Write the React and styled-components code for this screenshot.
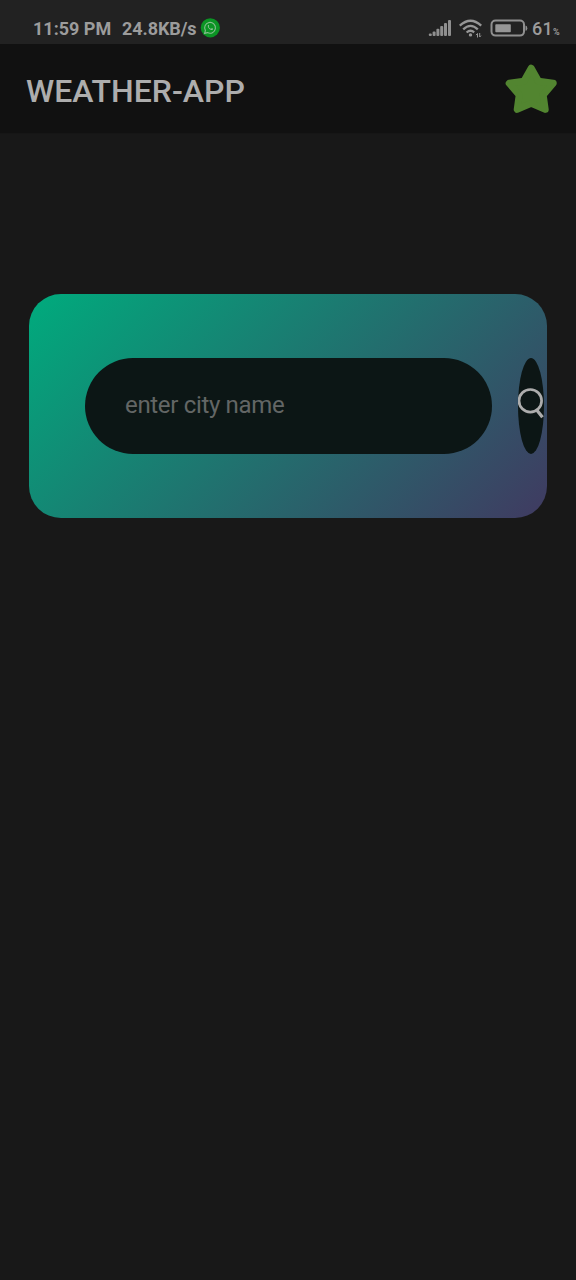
import React from "react";
import styled, { createGlobalStyle } from "styled-components";

const GlobalStyle = createGlobalStyle`
  * { box-sizing: border-box; }
  body { margin: 0; background: #181818; font-family: Roboto, "Liberation Sans", sans-serif; }
`;

const Screen = styled.div`
  display: flex;
  flex-direction: column;
  width: 576px;
  height: 1280px;
  background: #181818;
  overflow: hidden;
`;

const StatusBar = styled.div`
  display: flex;
  flex: none;
  justify-content: space-between;
  height: 44px;
  padding: 12px 15px 0 33px;
  background: #222222;
  color: #9c9c9c;
`;

const StatusGroup = styled.div`
  display: flex;
  align-items: center;
  height: 32px;
  gap: ${(p) => p.$gap}px;
`;

const StatusText = styled.span`
  width: ${(p) => p.$width}px;
  padding-top: 1px;
  font-size: 18px;
  line-height: 32px;
  font-weight: 700;
  letter-spacing: ${(p) => p.$spacing || 0}px;
  white-space: nowrap;
`;

const BatteryText = styled(StatusText)`
  margin-left: -4px;
  padding-top: 4px;
  font-weight: 500;
`;

const Percent = styled.small`
  font-size: 9px;
  font-weight: 700;
  letter-spacing: 0;
`;

const Icon = styled.svg`
  display: block;
  flex: none;
`;

const Header = styled.header`
  display: flex;
  flex: none;
  align-items: center;
  justify-content: space-between;
  height: 90px;
  padding: 0 18px 0 26px;
  background: #111111;
  border-bottom: 1px solid #161616;
`;

const Title = styled.h1`
  margin: 4px 0 0;
  color: #adadad;
  font-size: 32px;
  line-height: 40px;
  font-weight: 500;
`;

const Card = styled.main`
  display: flex;
  flex: none;
  align-items: center;
  gap: 25.6px;
  width: 518px;
  height: 224px;
  margin: 159.5px 0 0 29px;
  padding-left: 56px;
  border-radius: 32px;
  background: linear-gradient(135deg, #00ab7d, #403a61);
`;

const CityInput = styled.input`
  flex: none;
  width: 407px;
  height: 96px;
  padding: 0 40px 2px;
  border: 0;
  border-radius: 48px;
  outline: 0;
  background: #0c1615;
  color: #adadad;
  font: 400 24px Roboto, "Liberation Sans", sans-serif;
  letter-spacing: -0.33px;
  &::placeholder { color: #636665; opacity: 1; }
`;

const SearchButton = styled.button`
  display: flex;
  flex: none;
  align-items: center;
  justify-content: center;
  width: 26px;
  height: 96px;
  padding: 0 0 5px;
  border: 0;
  border-radius: 50%;
  background: #0c1615;
`;

const WhatsApp = () => (
  <Icon width="20" height="20" viewBox="0 0 20 20">
    <circle cx="10.3" cy="9.8" r="9.6" fill="#0b9424" />
    <path d="M4.6 15.4 5.4 12.6A5.4 5.4 0 1 1 7.5 14.6Z" fill="none" stroke="#8abd91" strokeWidth="1.1" />
    <path d="M8 7.1c.5-.4.8.2 1.1 1-.1.4-.7.6-.4 1 .6 1 1.3 1.5 2.3 1.9.4 0 .6-.8 1-.7 1 .4 1.4.7.9 1.3-1.7 1.5-6-1.6-4.9-4.5Z" fill="#9dc6a3" />
  </Icon>
);

const Signal = () => (
  <Icon width="23" height="17" viewBox="0 0 23 17" fill="#8f8f8f">
    <rect x="0.8" y="13.5" width="3" height="2.5" rx="1" />
    <rect x="4.6" y="11.5" width="3" height="4.5" rx="1" />
    <rect x="8.4" y="8.8" width="3" height="7.2" rx="1" />
    <rect x="12.2" y="6" width="3" height="10" rx="1" />
    <rect x="16" y="3" width="3" height="13" rx="1" />
    <rect x="20" y="0" width="3" height="16" rx="1" />
  </Icon>
);

const Wifi = () => (
  <Icon width="23" height="20" viewBox="0 0 23 20" fill="none" stroke="#969696" strokeWidth="2.3">
    <path d="M.8 7.7Q11.5-2.2 22.2 7.7M4.2 11.3Q11.5 4.4 18.8 11.3M7.6 14.5Q11.5 11.1 15.2 14.3" />
    <circle cx="11.5" cy="16.9" r="1.7" fill="#969696" stroke="none" />
    <path d="M18.5 19.5v-4l-1.5 1.6M20.7 15v4l1.3-1.4" strokeWidth="1" />
  </Icon>
);

const Battery = () => (
  <Icon width="38" height="18" viewBox="0 0 38 18">
    <rect x="1.5" y="1.6" width="32.5" height="15" rx="4" fill="none" stroke="#8f8f8f" strokeWidth="2" />
    <rect x="5.3" y="5.2" width="15.5" height="8" rx=".7" fill="#969696" />
    <path d="M35.5 6.6q1.8 0 1.8 2.6t-1.8 2.6Z" fill="#8f8f8f" />
  </Icon>
);

const Star = () => (
  <Icon width="54" height="52" viewBox="0 0 54 52">
    <path
      d="M27.2 5.2 34.5 18.2 49.2 20.3 39.2 32 41.2 46.4 27.2 40.4 13.2 46.4 15.2 32 5.2 20.3 19.9 18.2Z"
      fill="#528530"
      stroke="#528530"
      strokeWidth="7"
      strokeLinejoin="round"
    />
  </Icon>
);

const Magnifier = () => (
  <Icon width="26" height="31" viewBox="0 0 26 31" fill="none" stroke="#adadad">
    <circle cx="12.3" cy="12.8" r="11.3" strokeWidth="2.7" />
    <path d="M18.3 21.5 24.5 29.3" strokeWidth="3.3" />
  </Icon>
);

export default function App() {
  return (
    <Screen>
      <GlobalStyle />
      <StatusBar>
        <StatusGroup $gap={4}>
          <StatusText $width={85}>11:59 PM</StatusText>
          <StatusText $width={74} $spacing={-0.08}>24.8KB/s</StatusText>
          <WhatsApp />
        </StatusGroup>
        <StatusGroup $gap={8}>
          <Signal />
          <Wifi />
          <Battery />
          <BatteryText $width={29} $spacing={0.3}>61<Percent>%</Percent></BatteryText>
        </StatusGroup>
      </StatusBar>
      <Header>
        <Title>WEATHER-APP</Title>
        <Star />
      </Header>
      <Card>
        <CityInput type="text" placeholder="enter city name" />
        <SearchButton aria-label="Search">
          <Magnifier />
        </SearchButton>
      </Card>
    </Screen>
  );
}
